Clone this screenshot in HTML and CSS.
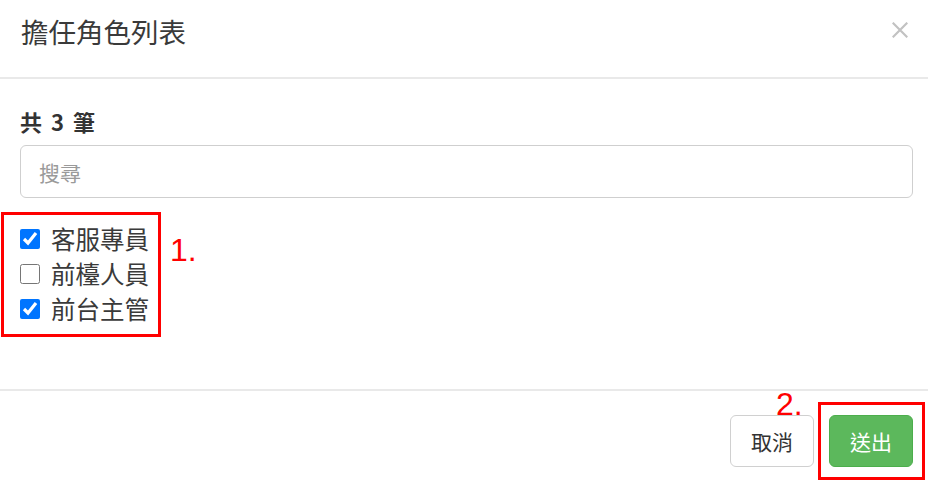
FILE: index.html
```html
<!DOCTYPE html>
<html lang="zh-Hant">
<head>
<meta charset="utf-8">
<title>擔任角色列表</title>
<link rel="stylesheet" href="styles.css">
</head>
<body>
<div class="modal">
  <div class="modal-header">
    <h4 class="modal-title">擔任角色列表</h4>
    <button class="close" type="button" aria-label="Close">
      <svg width="16" height="16" viewBox="0 0 16 16"><path d="M1.5 1.5 L14.5 14.5 M14.5 1.5 L1.5 14.5" stroke="#c2c2c2" stroke-width="2.2" stroke-linecap="square" fill="none"/></svg>
    </button>
  </div>
  <div class="modal-body">
    <div class="count">共 3 筆</div>
    <input class="search" type="text" placeholder="搜尋">
    <div class="role-list">
      <label class="role"><input type="checkbox" checked><span>客服專員</span></label>
      <label class="role"><input type="checkbox"><span>前檯人員</span></label>
      <label class="role"><input type="checkbox" checked><span>前台主管</span></label>
      <span class="note note-1">1.</span>
    </div>
  </div>
  <div class="modal-footer">
    <button class="btn btn-default" type="button">取消</button>
    <div class="submit-wrap">
      <button class="btn btn-success" type="button">送出</button>
      <span class="note note-2">2.</span>
    </div>
  </div>
</div>
</body>
</html>
```

FILE: styles.css
```css
* { box-sizing: border-box; }
html, body { margin: 0; padding: 0; background: #fff; }
body {
  font-family: "Noto Sans CJK TC", "Liberation Sans", sans-serif;
  color: #333;
  width: 928px;
  height: 481px;
  overflow: hidden;
}
.modal { width: 928px; height: 481px; display: flex; flex-direction: column; }

.modal-header {
  height: 79px;
  border-bottom: 2px solid #e9e9e9;
  display: flex;
  align-items: flex-start;
  justify-content: space-between;
  padding: 11px 20px 0 21px;
}
.modal-title {
  margin: 0;
  font-size: 27.5px;
  font-weight: 400;
  line-height: 40px;
  color: #3a3a3a;
}
.close {
  border: 0;
  background: none;
  padding: 0;
  margin-top: 11px;
  width: 16px;
  height: 16px;
  display: block;
}
.close svg { display: block; }

.modal-body {
  height: 312px;
  border-bottom: 2px solid #e9e9e9;
  padding: 27px 15px 0 20px;
  display: flex;
  flex-direction: column;
  align-items: flex-start;
}
.count {
  font-size: 22px;
  font-weight: 700;
  line-height: 30px;
  height: 30px;
  word-spacing: 4px;
  color: #333;
}
.search {
  margin-top: 9px;
  width: 100%;
  height: 53px;
  border: 1.5px solid #cfcfcf;
  border-radius: 6px;
  padding: 0 18px;
  font-family: "Noto Sans CJK TC", "Liberation Sans", sans-serif;
  font-size: 21px;
  color: #555;
  outline: none;
}
.search::placeholder { color: #9a9a9a; }

.role-list {
  position: relative;
  margin-top: 14px;
  margin-left: -19px;
  border: 3px solid #ff0000;
  padding: 6px 9px 8px 16px;
  display: flex;
  flex-direction: column;
}
.role {
  display: flex;
  align-items: center;
  height: 35px;
  font-size: 24.5px;
  line-height: 35px;
  color: #3a3a3a;
}
.role input {
  margin: 0 11px 0 0;
  width: 20px;
  height: 20px;
  accent-color: #0075ff;
}
.note {
  position: absolute;
  font-family: "Liberation Sans", Arial, sans-serif;
  font-size: 32px;
  line-height: 1;
  color: #ff0000;
  white-space: nowrap;
}
.note-1 { left: 166px; top: 19px; }

.modal-footer {
  flex: 1;
  display: flex;
  justify-content: flex-end;
  align-items: center;
  padding: 11px 3px 1px 0;
}
.btn {
  height: 52px;
  padding: 0 20px;
  border-radius: 6px;
  font-family: "Noto Sans CJK TC", "Liberation Sans", sans-serif;
  font-size: 21px;
  line-height: 1;
  cursor: pointer;
}
.btn-default {
  background: #fff;
  border: 1.5px solid #d0d0d0;
  color: #333;
  margin-right: 4px;
}
.btn-success {
  background: #5cb85c;
  border: 1.5px solid #4cae4c;
  color: #fff;
}
.submit-wrap {
  position: relative;
  border: 3px solid #ff0000;
  padding: 10px 9px 10px 8px;
  display: flex;
}
.note-2 { left: -45px; top: -17px; }
```
